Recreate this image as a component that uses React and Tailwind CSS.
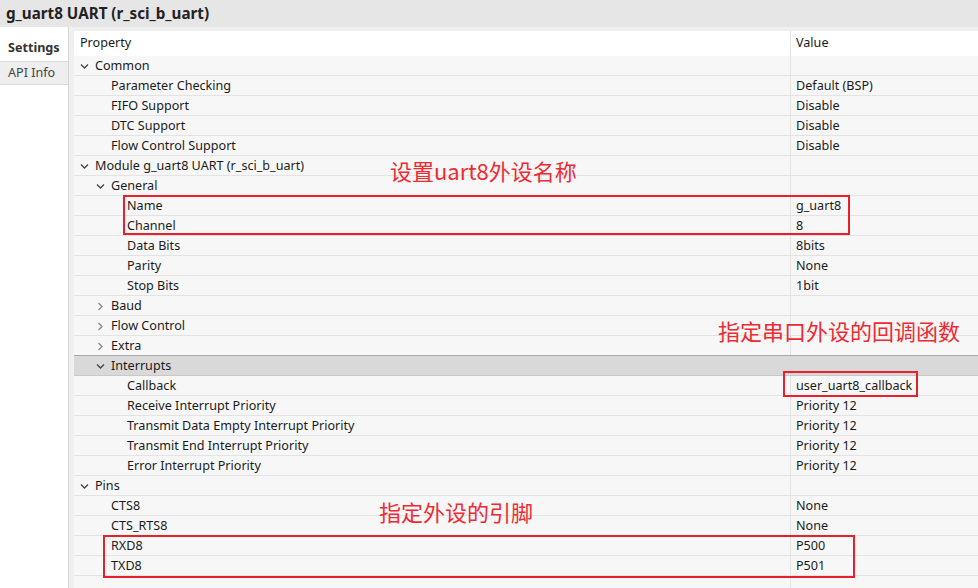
import React from 'react';

const rows = [
  { label: 'Common', level: 0, node: 'open' },
  { label: 'Parameter Checking', level: 1, value: 'Default (BSP)' },
  { label: 'FIFO Support', level: 1, value: 'Disable' },
  { label: 'DTC Support', level: 1, value: 'Disable' },
  { label: 'Flow Control Support', level: 1, value: 'Disable' },
  { label: 'Module g_uart8 UART (r_sci_b_uart)', level: 0, node: 'open' },
  { label: 'General', level: 1, node: 'open' },
  { label: 'Name', level: 2, value: 'g_uart8' },
  { label: 'Channel', level: 2, value: '8' },
  { label: 'Data Bits', level: 2, value: '8bits' },
  { label: 'Parity', level: 2, value: 'None' },
  { label: 'Stop Bits', level: 2, value: '1bit' },
  { label: 'Baud', level: 1, node: 'closed' },
  { label: 'Flow Control', level: 1, node: 'closed' },
  { label: 'Extra', level: 1, node: 'closed' },
  { label: 'Interrupts', level: 1, node: 'open', selected: true },
  { label: 'Callback', level: 2, value: 'user_uart8_callback' },
  { label: 'Receive Interrupt Priority', level: 2, value: 'Priority 12' },
  { label: 'Transmit Data Empty Interrupt Priority', level: 2, value: 'Priority 12' },
  { label: 'Transmit End Interrupt Priority', level: 2, value: 'Priority 12' },
  { label: 'Error Interrupt Priority', level: 2, value: 'Priority 12' },
  { label: 'Pins', level: 0, node: 'open' },
  { label: 'CTS8', level: 1, value: 'None' },
  { label: 'CTS_RTS8', level: 1, value: 'None' },
  { label: 'RXD8', level: 1, value: 'P500' },
  { label: 'TXD8', level: 1, value: 'P501' },
];

const indent = ['pl-[21px]', 'pl-[37px]', 'pl-[53px]'];

const Chevron = ({ open }) => (
  <svg width="9" height="9" viewBox="0 0 9 9" className="absolute left-[-15px] top-[6px]">
    {open ? (
      <polyline points="1,2.5 4.5,6 8,2.5" fill="none" stroke="#444" strokeWidth="1.3" />
    ) : (
      <polyline points="2.5,1 6,4.5 2.5,8" fill="none" stroke="#888" strokeWidth="1.3" />
    )}
  </svg>
);

const Row = ({ row }) => (
  <div
    className={`flex h-[20px] border-b ${
      row.selected ? 'bg-[#d9d9d9] border-[#c8c8c8] border-t border-t-[#a8a8a8] -mt-px h-[21px]' : 'border-[#e3e3e3]'
    }`}
  >
    <div className={`w-[716px] shrink-0 ${indent[row.level]} flex items-center`}>
      <span className="relative leading-[19px]">
        {row.node && <Chevron open={row.node === 'open'} />}
        {row.label}
      </span>
    </div>
    <div className={`flex-1 border-l ${row.selected ? 'border-[#d9d9d9]' : 'border-[#e3e3e3]'} pl-[5px] flex items-center leading-[19px]`}>
      {row.value}
    </div>
  </div>
);

export default function App() {
  return (
    <div className="relative w-[978px] h-[588px] overflow-hidden bg-[#f0f0f0] text-[12.6px] text-[#1b1b1b] font-['Noto_Sans','Noto_Sans_CJK_SC',sans-serif]">
      <div className="h-[27px] bg-[#e6e6e6] pl-[6px] flex items-center text-[15.2px] font-bold text-[#222]">
        g_uart8 UART (r_sci_b_uart)
      </div>
      <div className="flex h-[561px]">
        <div className="w-[69px] shrink-0 bg-white border-r border-[#d4d4d4] pt-[9px]">
          <div className="h-[25px] pl-[8px] flex items-center font-bold text-[#333]">Settings</div>
          <div className="h-[24px] pl-[8px] flex items-center bg-[#eeeeee] border-y border-[#dadada] text-[#444]">
            API Info
          </div>
        </div>
        <div className="ml-[5px] mt-[4px] flex-1 bg-[#f7f7f7]">
          <div className="flex h-[25px] bg-white">
            <div className="w-[716px] shrink-0 pl-[6px] flex items-center">Property</div>
            <div className="flex-1 border-l border-[#e3e3e3] pl-[5px] flex items-center">Value</div>
          </div>
          {rows.map((r) => (
            <Row key={r.label} row={r} />
          ))}
          <div className="flex h-[20px]">
            <div className="w-[716px] shrink-0" />
            <div className="flex-1 border-l border-[#e3e3e3]" />
          </div>
        </div>
      </div>

      {/* annotations drawn over the grid */}
      <div className="absolute left-[390px] top-[155px] text-[22px] leading-[30px] text-[#ee2a33] font-['Noto_Sans_CJK_SC',sans-serif]">
        设置uart8外设名称
      </div>
      <div className="absolute left-[123px] top-[195px] w-[727px] h-[40px] border-2 border-[#e8202a]" />
      <div className="absolute left-[718px] top-[315px] text-[22px] leading-[30px] text-[#ee2a33] font-['Noto_Sans_CJK_SC',sans-serif]">
        指定串口外设的回调函数
      </div>
      <div className="absolute left-[783px] top-[371px] w-[135px] h-[26px] border-2 border-[#e8202a]" />
      <div className="absolute left-[379px] top-[496px] text-[22px] leading-[30px] text-[#ee2a33] font-['Noto_Sans_CJK_SC',sans-serif]">
        指定外设的引脚
      </div>
      <div className="absolute left-[103px] top-[535px] w-[752px] h-[43px] border-2 border-[#e8202a]" />
    </div>
  );
}
